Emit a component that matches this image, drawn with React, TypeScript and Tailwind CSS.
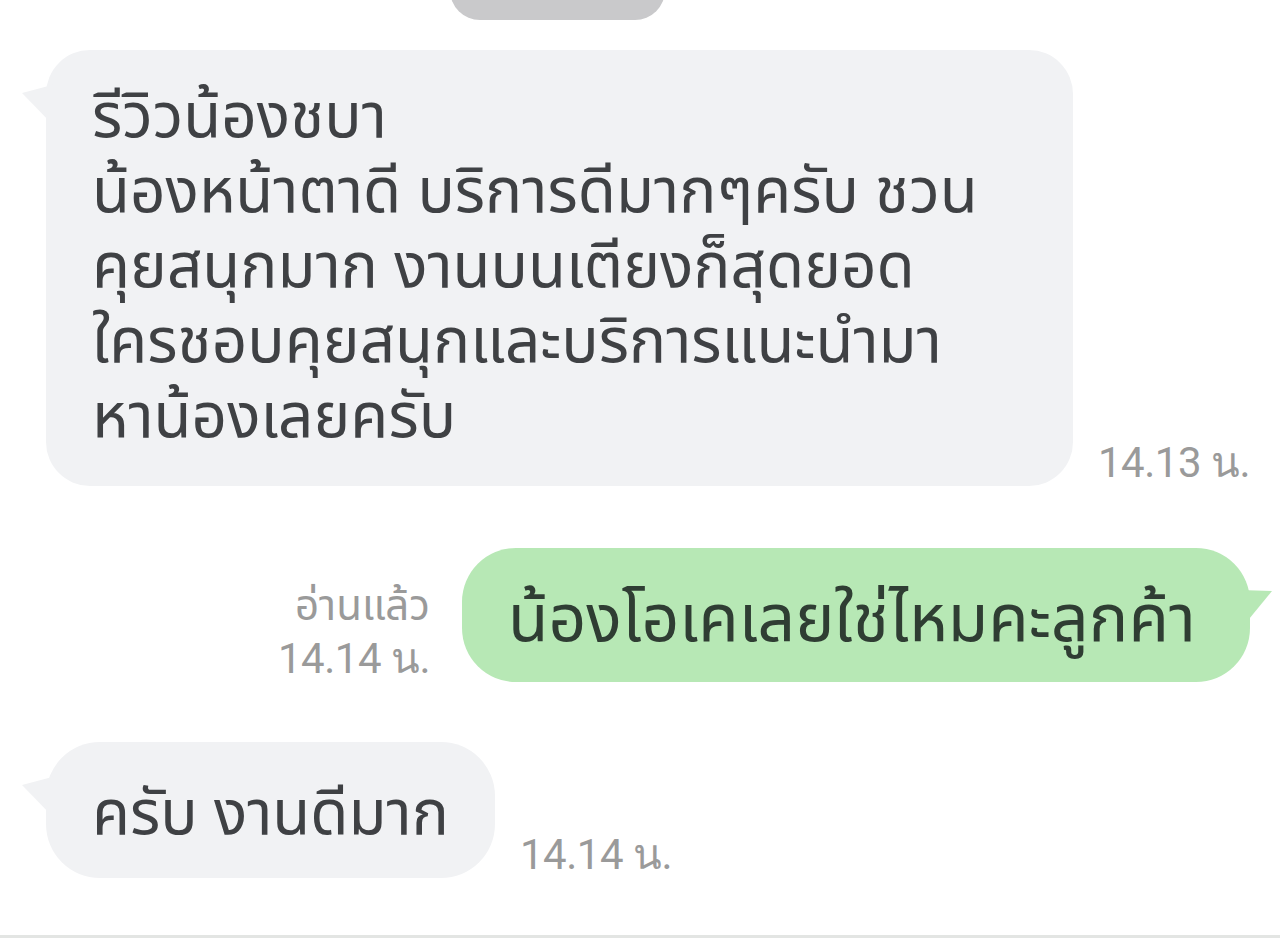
const thai = "font-['Noto_Sans','Noto_Sans_Thai',sans-serif]";

function LeftTail() {
  return (
    <svg
      className="absolute left-[-24px] top-[30px]"
      width="34"
      height="50"
      viewBox="0 0 34 50"
    >
      <path d="M34 4 L0 13 L34 48 Z" fill="#f1f2f4" />
    </svg>
  );
}

function RightTail() {
  return (
    <svg
      className="absolute right-[-22px] top-[40px]"
      width="32"
      height="44"
      viewBox="0 0 32 44"
    >
      <path d="M0 2 L32 3 L0 42 Z" fill="#b7e8b5" />
    </svg>
  );
}

function Time({ text }: { text: string }) {
  return (
    <div className="font-['Roboto',sans-serif] text-[42px] leading-[46px] text-[#9a9a9a] tracking-[-0.5px]">
      {text}
    </div>
  );
}

const reviewLines = [
  "รีวิวน้องชบา",
  "น้องหน้าตาดี บริการดีมากๆครับ ชวน",
  "คุยสนุกมาก งานบนเตียงก็สุดยอด",
  "ใครชอบคุยสนุกและบริการแนะนำมา",
  "หาน้องเลยครับ",
];

export default function App() {
  return (
    <div className={`w-[1280px] h-[938px] bg-white overflow-hidden flex flex-col ${thai}`}>
      <div className="ml-[450px] mt-[-40px] w-[215px] h-[60px] rounded-full bg-[#c9c9cb] shrink-0" />

      <div className="flex items-end pl-[46px] mt-[30px]">
        <div className="relative w-[1027px] h-[436px] rounded-[44px] bg-[#f1f2f4] pl-[46px] pt-[26px]">
          <LeftTail />
          <div className="relative flex flex-col text-[62px] leading-[75px] text-[#3f4144] whitespace-nowrap">
            {reviewLines.map((line) => (
              <div key={line} className="h-[75px]">
                {line}
              </div>
            ))}
          </div>
        </div>
        <div className="ml-[25px]">
          <Time text="14.13 น." />
        </div>
      </div>

      <div className="flex items-end justify-end pr-[30px] mt-[62px]">
        <div className="flex flex-col items-end mr-[32px]">
          <div className="text-[42px] leading-[64px] text-[#9a9a9a]">อ่านแล้ว</div>
          <Time text="14.14 น." />
        </div>
        <div className="relative h-[134px] w-[788px] rounded-[54px] bg-[#b7e8b5] flex items-center pl-[46px]">
          <RightTail />
          <div className="relative text-[66px] leading-[70px] text-[#2f3d33] whitespace-nowrap">
            น้องโอเคเลยใช่ไหมคะลูกค้า
          </div>
        </div>
      </div>

      <div className="flex items-end pl-[46px] mt-[60px]">
        <div className="relative h-[136px] w-[449px] rounded-[54px] bg-[#f1f2f4] flex items-center pl-[46px]">
          <LeftTail />
          <div className="relative text-[62px] leading-[70px] text-[#3f4144] whitespace-nowrap">
            ครับ งานดีมาก
          </div>
        </div>
        <div className="ml-[25px]">
          <Time text="14.14 น." />
        </div>
      </div>

      <div className="mt-auto h-[3px] bg-[#e3e5e3]" />
    </div>
  );
}
